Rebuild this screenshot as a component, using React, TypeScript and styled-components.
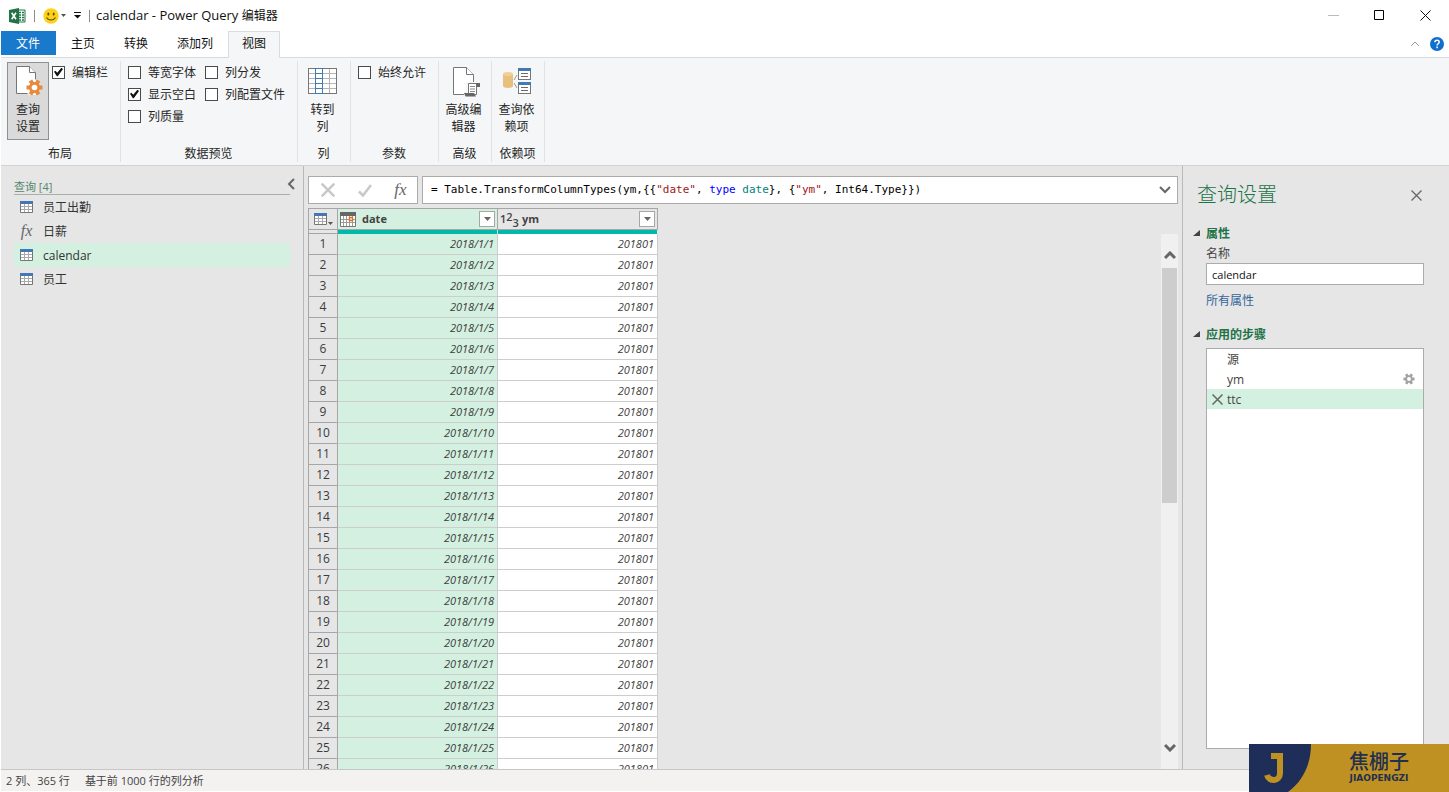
import React, { useState } from 'react';
import styled, { createGlobalStyle, css } from 'styled-components';

const sans = `"Open Sans", "Noto Sans CJK SC", sans-serif`;
const mono = `"DejaVu Sans Mono", "Noto Sans CJK SC", monospace`;

const GlobalStyle = createGlobalStyle`
  *, *::before, *::after { box-sizing: border-box; }
  body { margin: 0; background: #fff; font: 12px/17px ${sans}; color: #262626; }
  button, input { font: inherit; color: inherit; margin: 0; padding: 0; }
  button { background: none; border: 0; cursor: pointer; }
  svg { display: block; flex: none; }
  h1, h2, h3, p, ul, ol { margin: 0; padding: 0; font: inherit; list-style: none; }
`;

const Window = styled.div`
  position: relative;
  display: flex;
  flex-direction: column;
  height: 100vh;
  padding: 0 0 1px 1px;
  overflow: hidden;
`;

/* Title bar */
const TitleBar = styled.header`
  display: flex;
  align-items: center;
  height: 31px;
  padding: 0 18px 0 8px;
`;
const Divider = styled.span`
  width: 1px;
  height: 12px;
  background: #8a8a8a;
`;
const QuickAccess = styled.div`
  display: flex;
  align-items: center;
  gap: 8px;
  margin-right: 6px;
`;
const QuickButton = styled.button`
  display: flex;
  align-items: center;
  gap: 2px;
`;
const WindowTitle = styled.h1`
  flex: 1;
  font-size: 13px;
  color: #111;
  span { font-size: 12px; }
`;
const WindowButtons = styled.div`
  display: flex;
  gap: 35px;
`;
const IconButton = styled.button`
  display: grid;
  place-items: center;
`;

/* Ribbon tabs */
const TabBar = styled.nav`
  display: flex;
  align-items: flex-start;
  gap: 1px;
  height: 27px;
  padding-right: 5px;
  border-bottom: 1px solid #dadbdc;
`;
const Tab = styled.button<{ $kind?: 'file' | 'active' }>`
  height: 24px;
  padding: 0 14px;
  color: #111;
  ${(p) => p.$kind === 'file' && css`
    padding: 0 16px 0 15px;
    background: #1979ca;
    color: #fff;
  `}
  ${(p) => p.$kind === 'active' && css`
    height: 27px;
    padding: 0 13px 3px;
    border: 1px solid #dadbdc;
    border-bottom: 0;
    background: #f5f6f7;
  `}
`;
const TabTools = styled.div`
  display: flex;
  align-items: center;
  align-self: center;
  gap: 10px;
  margin-left: auto;
`;

/* Ribbon */
const Ribbon = styled.section`
  display: flex;
  height: 108px;
  padding: 3px 0;
  background: #f5f6f7;
  border-bottom: 1px solid #d2d2d2;
`;
const Group = styled.div<{ $width: number }>`
  display: flex;
  flex-direction: column;
  justify-content: space-between;
  width: ${(p) => p.$width}px;
  border-right: 1px solid #e1e2e3;
`;
const GroupBody = styled.div<{ $center?: boolean }>`
  display: flex;
  gap: 3px;
  padding: 0 7px;
  ${(p) => p.$center && css`justify-content: center; padding: 0 2px 0 0;`}
`;
const GroupLabel = styled.div`
  padding-right: 1px;
  text-align: center;
  line-height: 16px;
`;
const BigButton = styled.button<{ $pressed?: boolean }>`
  display: flex;
  flex-direction: column;
  align-items: center;
  gap: 3px;
  width: 42px;
  height: 78px;
  margin: 1px 0 0 -1px;
  padding: 3px 0 0;
  border: 1px solid transparent;
  white-space: pre-line;
  ${(p) => p.$pressed && css`
    background: #d9dad9;
    border-color: #919191;
  `}
`;
const CheckGrid = styled.div`
  display: grid;
  grid-auto-flow: column;
  grid-template-rows: repeat(3, 22px);
  column-gap: 9px;
`;
const CheckLabel = styled.label`
  display: flex;
  align-items: center;
  gap: 7px;
  white-space: nowrap;
`;
const CheckBox = styled.input`
  appearance: none;
  display: grid;
  place-items: center;
  width: 13px;
  height: 13px;
  border: 1px solid #4a4a4a;
  background: #fff;
  &:checked::after {
    content: '';
    width: 9px;
    height: 9px;
    background: #111;
    clip-path: polygon(0 48%, 16% 36%, 36% 58%, 82% 2%, 100% 16%, 42% 96%, 32% 96%);
  }
`;

/* Work area */
const Body = styled.main`
  display: flex;
  flex: 1;
  min-height: 0;
  background: #e6e6e6;
`;
const QueriesPane = styled.aside`
  width: 303px;
  flex: none;
  padding: 12px 13px 0;
  border-right: 1px solid #b9b9b9;
`;
const QueriesHead = styled.div`
  display: flex;
  align-items: flex-start;
  justify-content: space-between;
  height: 17px;
  border-bottom: 1px solid #a9aeab;
  color: #56876e;
  h2 { font-size: 11px; line-height: 18px; }
  button { margin-right: -5px; }
`;
const QueryItem = styled.button<{ $on?: boolean }>`
  display: flex;
  align-items: center;
  gap: 10px;
  width: 100%;
  height: 24px;
  padding-left: 6px;
  color: #333;
  background: ${(p) => (p.$on ? '#d3f0e0' : 'transparent')};
`;
const Centre = styled.section`
  display: flex;
  flex-direction: column;
  gap: 4px;
  flex: 1;
  min-width: 0;
  padding: 10px 4px 0;
`;
const FormulaRow = styled.div`
  display: flex;
  gap: 4px;
  height: 28px;
`;
const FormulaTools = styled.div`
  display: flex;
  align-items: center;
  justify-content: space-between;
  width: 110px;
  padding: 0 10px 0 12px;
  background: #fff;
  border: 1px solid #ababab;
`;
const FormulaBox = styled.div`
  display: flex;
  align-items: center;
  justify-content: space-between;
  flex: 1;
  padding: 0 6px 0 8px;
  background: #fff;
  border: 1px solid #ababab;
  font: 11px/16px ${mono};
  color: #000;
`;
const Code = styled.code<{ $c?: string }>`
  font-family: inherit;
  white-space: pre;
  color: ${(p) => p.$c ?? 'inherit'};
`;
const GridArea = styled.div`
  display: flex;
  justify-content: space-between;
  flex: 1;
  min-height: 0;
  overflow: hidden;
`;
const DataTable = styled.table`
  align-self: flex-start;
  width: 350px;
  table-layout: fixed;
  border-collapse: separate;
  border-spacing: 0;
  border-left: 1px solid #a6a6a6;
  font-size: 11px;
  line-height: 16px;
  color: #3b3b3b;
  th, td { padding: 0; }
`;
const ColumnHead = styled.th<{ $on?: boolean; $narrow?: boolean }>`
  width: ${(p) => (p.$narrow ? '29px' : 'auto')};
  height: 22px;
  border: 1px solid #a6a6a6;
  border-left: 0;
  text-align: left;
  background: ${(p) => (p.$on ? '#d3f0e0' : '#e6e6e6')};
`;
const HeadContent = styled.div`
  display: flex;
  align-items: center;
  justify-content: center;
  gap: 6px;
  padding: 0 2px;
  color: #444;
  span { flex: 1; }
`;
const FilterButton = styled.button`
  display: grid;
  place-items: center;
  width: 16px;
  height: 16px;
  background: #fff;
  border: 1px solid #a6a6a6;
`;
const QualityCell = styled.td<{ $bar?: boolean }>`
  height: 4px;
  border-right: 1px solid ${(p) => (p.$bar ? '#d8f2ee' : '#a6a6a6')};
  border-bottom: ${(p) => (p.$bar ? 0 : '1px solid #a6a6a6')};
  background: ${(p) => (p.$bar ? '#01b8aa' : '#e6e6e6')};
`;
const RowNumber = styled.th`
  height: 21px;
  border-right: 1px solid #a6a6a6;
  border-bottom: 1px solid #a6a6a6;
  font-size: 12px;
  font-weight: 400;
`;
const Cell = styled.td<{ $on?: boolean }>`
  height: 21px;
  border-right: 1px solid #cdcdcd;
  border-bottom: 1px solid #cdcdcd;
  background: ${(p) => (p.$on ? '#d3f0e0' : '#fff')};
  text-align: right;
  font-style: italic;
  && { padding-right: 3px; }
`;
const ScrollTrack = styled.div`
  display: flex;
  flex-direction: column;
  width: 17px;
  margin-top: 26px;
  background: #f0f0f0;
`;
const ScrollArrow = styled.button`
  display: grid;
  place-items: end center;
  height: 34px;
  padding-bottom: 8px;
`;
const ScrollThumb = styled.div`
  flex: 0 0 44%;
  margin: 0 1px;
  background: #cdcdcd;
`;
const ScrollEnd = styled(ScrollArrow)`
  margin-top: auto;
  padding-bottom: 17px;
`;

/* Query settings */
const SettingsPane = styled.aside`
  display: flex;
  flex-direction: column;
  flex: none;
  width: 267px;
  padding: 15px 25px 20px 10px;
  border-left: 1px solid #b9b9b9;
`;
const SettingsHead = styled.div`
  display: flex;
  align-items: center;
  justify-content: space-between;
  height: 28px;
  padding: 0 2px 0 4px;
  margin-bottom: 14px;
  color: #217346;
  h2 { font-size: 20px; line-height: 28px; font-weight: 300; }
`;
const SectionTitle = styled.h3`
  display: flex;
  align-items: center;
  gap: 6px;
  height: 20px;
  color: #217346;
  font-weight: 700;
`;
const Field = styled.div`
  display: flex;
  flex-direction: column;
  gap: 1px;
  padding: 2px 0 0 13px;
  margin-bottom: 15px;
  color: #444;
`;
const NameInput = styled.input`
  width: 100%;
  height: 22px;
  margin-bottom: 6px;
  padding: 0 5px;
  font-size: 11px;
  color: #111;
  background: #fff;
  border: 1px solid #ababab;
  border-radius: 0;
`;
const PropertiesLink = styled.a`
  color: #33669b;
  text-decoration: none;
`;
const StepList = styled.ol`
  flex: 1;
  margin: 4px 0 0 13px;
  background: #fff;
  border: 1px solid #ababab;
`;
const Step = styled.li<{ $on?: boolean }>`
  display: grid;
  grid-template-columns: 12px 1fr auto;
  align-items: center;
  gap: 4px;
  height: 20px;
  padding: 0 8px 0 4px;
  color: #444;
  background: ${(p) => (p.$on ? '#d3f0e0' : 'transparent')};
`;

const StatusBar = styled.footer`
  display: flex;
  align-items: center;
  gap: 15px;
  height: 22px;
  padding: 0 5px 1px;
  border-top: 1px solid #c6c6c6;
  background: #f3f2f1;
  font-size: 11px;
  color: #444;
`;

/* Author badge laid over the lower right corner */
const Badge = styled.div`
  position: absolute;
  right: 0;
  bottom: 0;
  display: flex;
  width: 200px;
  height: 48px;
  background: #bf9022;
  color: #22304f;
`;
const BadgeText = styled.div`
  display: flex;
  flex-direction: column;
  align-items: center;
  gap: 2px;
  padding: 7px 0 0 38px;
  strong { font: 500 20px/20px "Noto Sans CJK SC", sans-serif; }
  small { font: 700 9px/11px "DejaVu Sans", sans-serif; }
`;

const Excel = () => (
  <svg width="17" height="16" viewBox="0 0 17 16">
    <path d="M9 2h7v12H9z" fill="#fff" stroke="#217346" />
    <path d="M10 4.500h2M13 4.500h2M10 7h2M13 7h2M10 9.500h2M13 9.500h2M10 12h2M13 12h2" stroke="#217346" strokeWidth="1.300" />
    <path d="M0 2l10-2v16L0 14z" fill="#217346" />
    <path d="M2.700 4.800l4.300 6.400M7 4.800l-4.300 6.400" stroke="#fff" strokeWidth="1.600" />
  </svg>
);
const Smile = () => (
  <svg width="16" height="16" viewBox="0 0 16 16">
    <circle cx="8" cy="8" r="7.700" fill="#fcd116" />
    <ellipse cx="5.300" cy="6" rx="1" ry="1.500" fill="#5b4a12" />
    <ellipse cx="10.700" cy="6" rx="1" ry="1.500" fill="#5b4a12" />
    <path d="M3.500 9.500c2 3.300 7 3.300 9 0" fill="none" stroke="#5b4a12" strokeWidth="1.200" />
  </svg>
);
const Caret = () => (
  <svg width="5" height="3" viewBox="0 0 5 3"><path d="M0 0h5L2.500 3z" fill="#555" /></svg>
);
const FilterCaret = () => (
  <svg width="7" height="4" viewBox="0 0 7 4"><path d="M0 0h7L3.500 4z" fill="#666" /></svg>
);
const Customize = () => (
  <svg width="7" height="7" viewBox="0 0 7 7"><path d="M0 .5h7" stroke="#111" /><path d="M0 3h7L3.500 6.500z" fill="#111" /></svg>
);
const Cross = ({ size = 11, color = '#111', weight = 1 }: { size?: number; color?: string; weight?: number }) => (
  <svg width={size} height={size} viewBox="0 0 11 11"><path d="M.5.5l10 10M10.500.5l-10 10" stroke={color} strokeWidth={weight} /></svg>
);
const Chevron = ({ d, w, h, color = '#666', weight = 2 }: { d: string; w: number; h: number; color?: string; weight?: number }) => (
  <svg width={w} height={h} viewBox={`0 0 ${w} ${h}`}><path d={d} fill="none" stroke={color} strokeWidth={weight} /></svg>
);
const Help = () => (
  <svg width="14" height="14" viewBox="0 0 14 14">
    <circle cx="7" cy="7" r="7" fill="#0f6fce" />
    <path d="M4.900 5.300c0-2.700 4.300-2.700 4.300-.2 0 1.700-2.100 1.600-2.100 3.400M7.100 9.600v1.600" fill="none" stroke="#fff" strokeWidth="1.500" />
  </svg>
);
const Gear = ({ x, y, s, color, hole }: { x: number; y: number; s: number; color: string; hole: string }) => (
  <g transform={`translate(${x} ${y}) scale(${s})`}>
    {[0, 60, 120].map((a) => (
      <rect key={a} x="-2" y="-8" width="4" height="16" fill={color} transform={`rotate(${a + 30})`} />
    ))}
    <circle r="5.500" fill={color} />
    <circle r="2.800" fill={hole} />
  </g>
);
const SettingsIcon = () => (
  <svg width="32" height="32" viewBox="0 0 32 32">
    <path d="M4.500.5h13l6 6v21h-19z" fill="#fff" stroke="#767676" />
    <path d="M17.500.5v6h6" fill="#fff" stroke="#767676" />
    <path d="M14 22a8.500 8.500 0 0 1 10-8.500V29H17a8.500 8.500 0 0 1-3-7z" fill="#fff" />
    <Gear x={22.5} y={21.5} s={1} color="#e8893c" hole="#fff" />
  </svg>
);
const GoToColumn = () => (
  <svg width="30" height="32" viewBox="0 0 30 32">
    <rect x=".5" y="2.500" width="28" height="25" fill="#fff" stroke="#767676" />
    <path d="M1 7.500h27M1 12.500h27M1 17.500h27M1 22.500h27M21.500 3v24" stroke="#b5b5b5" />
    <path d="M7.500 2.500h7v25h-7zM8 7.500h6M8 12.500h6M8 17.500h6M8 22.500h6" fill="none" stroke="#3d7cb8" />
  </svg>
);
const AdvancedIcon = () => (
  <svg width="32" height="32" viewBox="0 0 32 32">
    <path d="M5.500 1.500h13l7 7v20h-20z" fill="#fff" stroke="#767676" />
    <path d="M18.500 1.500v7h7" fill="#fff" stroke="#767676" />
    <path d="M20 17.500h11v3h-2.500v10H17.500v-3h2z" fill="#fff" stroke="#f5f6f7" strokeWidth="3" />
    <path d="M20.500 17.500h8v11h-8z" fill="#fff" stroke="#767676" />
    <path d="M28 17h4v4h-4zM16 27h10l2 3.500h-10.500z" fill="#666" />
    <path d="M22 20.500h5M22 23h5M22 25.500h5" stroke="#8a8a8a" />
  </svg>
);
const Dependencies = () => (
  <svg width="30" height="32" viewBox="0 0 30 32">
    <path d="M1 8v12c0 2.600 10 2.600 10 0V8z" fill="#e8c07d" />
    <ellipse cx="6" cy="8" rx="5" ry="2" fill="#f1cf97" />
    <path d="M12 14l3-5M12 17l3 5" stroke="#9a9a9a" />
    {[2, 16].map((y) => (
      <g key={y}>
        <rect x="16.500" y={y + 0.5} width="12" height="11" fill="#fff" stroke="#767676" />
        <rect x="16" y={y} width="13" height="3" fill="#4478b5" />
        <path d={`M19 ${y + 5.5}h7M19 ${y + 8.5}h7`} stroke="#6a6a6a" />
      </g>
    ))}
  </svg>
);
const TableIcon = () => (
  <svg width="13" height="12" viewBox="0 0 13 12">
    <path d="M.5 2v9.500h12V2" fill="#fff" stroke="#767676" />
    <path d="M1 5.500h11M1 8.500h11M4.500 3v8M8.500 3v8" stroke="#a9a9a9" />
    <path d="M0 0h13v3H0z" fill="#4478b5" />
  </svg>
);
const BigTableIcon = () => (
  <svg width="19" height="13" viewBox="0 0 19 13">
    <path d="M.5 2v9.500h12V2" fill="#fff" stroke="#767676" />
    <path d="M1 5.500h11M1 8.500h11M4.500 3v8M8.500 3v8" stroke="#a9a9a9" />
    <path d="M0 0h13v3H0z" fill="#4478b5" />
    <path d="M14 9h5l-2.500 3z" fill="#555" />
  </svg>
);
const CalendarIcon = () => (
  <svg width="16" height="15" viewBox="0 0 16 15">
    <path d="M.5.5h15v14H.5z" fill="#fff" stroke="#767676" />
    <path d="M1 7.500h14M1 10.500h14M3.500 4v10M6.500 4v10M9.500 4v10M12.500 4v10" stroke="#9c9c9c" />
    <path d="M0 0h16v4H0z" fill="#666" />
    <path d="M9.500 5.500h3v3h-3z" fill="#fff" stroke="#e0701c" strokeWidth="1.400" />
  </svg>
);
const NumberType = styled.i`
  display: flex;
  width: 16px;
  font: 600 11px/16px ${sans};
  sup, sub { font-size: 11px; line-height: 11px; }
  sup { padding-bottom: 3px; }
  sub { padding-top: 6px; }
`;
const Fx = styled.i<{ $size: number }>`
  width: 13px;
  font: italic ${(p) => p.$size}px/20px "Liberation Serif", serif;
  color: #666;
`;
const Check = () => (
  <svg width="14" height="13" viewBox="0 0 14 13"><path d="M1 7.500l4 4L13 1" fill="none" stroke="#c9c9c9" strokeWidth="2.600" /></svg>
);
const Triangle = () => (
  <svg width="7" height="7" viewBox="0 0 7 7"><path d="M7 0v6H0z" fill="#444" /></svg>
);

const rows = Array.from({ length: 26 }, (_, i) => ({ date: `2018/1/${i + 1}`, ym: '201801' }));
const queries = ['员工出勤', '日薪', 'calendar', '员工'];

const Option = ({ label, on = false }: { label: string; on?: boolean }) => (
  <CheckLabel><CheckBox type="checkbox" defaultChecked={on} />{label}</CheckLabel>
);

export default function App() {
  const [selected, setSelected] = useState('calendar');
  return (
    <Window>
      <GlobalStyle />
      <TitleBar>
        <QuickAccess>
          <Excel />
          <Divider />
          <QuickButton aria-label="反馈"><Smile /><Caret /></QuickButton>
          <QuickButton aria-label="自定义快速访问工具栏"><Customize /></QuickButton>
          <Divider />
        </QuickAccess>
        <WindowTitle>calendar - Power Query <span>编辑器</span></WindowTitle>
        <WindowButtons>
          <IconButton aria-label="最小化"><Chevron d="M0 5.500h11" w={11} h={11} color="#bbb" weight={1} /></IconButton>
          <IconButton aria-label="最大化"><Chevron d="M.5.5h9v9H.5z" w={11} h={11} color="#000" weight={1} /></IconButton>
          <IconButton aria-label="关闭"><Cross /></IconButton>
        </WindowButtons>
      </TitleBar>

      <TabBar>
        <Tab $kind="file">文件</Tab>
        <Tab>主页</Tab>
        <Tab>转换</Tab>
        <Tab>添加列</Tab>
        <Tab $kind="active">视图</Tab>
        <TabTools>
          <IconButton aria-label="折叠功能区"><Chevron d="M1 5l4-4 4 4" w={10} h={6} color="#999" weight={1} /></IconButton>
          <IconButton aria-label="帮助"><Help /></IconButton>
        </TabTools>
      </TabBar>

      <Ribbon>
        <Group $width={120}>
          <GroupBody>
            <BigButton $pressed><SettingsIcon />{'查询\n设置'}</BigButton>
            <CheckGrid><Option label="编辑栏" on /></CheckGrid>
          </GroupBody>
          <GroupLabel>布局</GroupLabel>
        </Group>
        <Group $width={177}>
          <GroupBody>
            <CheckGrid>
              <Option label="等宽字体" />
              <Option label="显示空白" on />
              <Option label="列质量" />
              <Option label="列分发" />
              <Option label="列配置文件" />
            </CheckGrid>
          </GroupBody>
          <GroupLabel>数据预览</GroupLabel>
        </Group>
        <Group $width={53}>
          <GroupBody $center><BigButton><GoToColumn />{'转到\n列'}</BigButton></GroupBody>
          <GroupLabel>列</GroupLabel>
        </Group>
        <Group $width={88}>
          <GroupBody><CheckGrid><Option label="始终允许" /></CheckGrid></GroupBody>
          <GroupLabel>参数</GroupLabel>
        </Group>
        <Group $width={53}>
          <GroupBody $center><BigButton><AdvancedIcon />{'高级编\n辑器'}</BigButton></GroupBody>
          <GroupLabel>高级</GroupLabel>
        </Group>
        <Group $width={53}>
          <GroupBody $center><BigButton><Dependencies />{'查询依\n赖项'}</BigButton></GroupBody>
          <GroupLabel>依赖项</GroupLabel>
        </Group>
      </Ribbon>

      <Body>
        <QueriesPane>
          <QueriesHead>
            <h2>查询 [4]</h2>
            <IconButton aria-label="折叠"><Chevron d="M7 1L2 6l5 5" w={8} h={12} /></IconButton>
          </QueriesHead>
          {queries.map((name) => (
            <QueryItem key={name} $on={name === selected} onClick={() => setSelected(name)}>
              {name === '日薪' ? <Fx $size={16}>fx</Fx> : <TableIcon />}
              {name}
            </QueryItem>
          ))}
        </QueriesPane>

        <Centre>
          <FormulaRow>
            <FormulaTools>
              <IconButton aria-label="取消"><Cross size={14} color="#c9c9c9" weight={2} /></IconButton>
              <IconButton aria-label="确认"><Check /></IconButton>
              <IconButton aria-label="插入步骤"><Fx $size={17}>fx</Fx></IconButton>
            </FormulaTools>
            <FormulaBox>
              <Code>
                {'= Table.TransformColumnTypes(ym,{{'}<Code $c="#a31515">"date"</Code>{', '}
                <Code $c="#0000ff">type</Code> <Code $c="#008080">date</Code>{'}, {'}
                <Code $c="#a31515">"ym"</Code>{', Int64.Type}})'}
              </Code>
              <IconButton aria-label="展开编辑栏"><Chevron d="M1 1l5 5 5-5" w={12} h={8} /></IconButton>
            </FormulaBox>
          </FormulaRow>
          <GridArea>
            <DataTable>
              <thead>
                <tr>
                  <ColumnHead $narrow><HeadContent><IconButton aria-label="表菜单"><BigTableIcon /></IconButton></HeadContent></ColumnHead>
                  <ColumnHead $on>
                    <HeadContent><CalendarIcon /><span>date</span><FilterButton aria-label="筛选 date"><FilterCaret /></FilterButton></HeadContent>
                  </ColumnHead>
                  <ColumnHead>
                    <HeadContent>
                      <NumberType>1<sup>2</sup><sub>3</sub></NumberType>
                      <span>ym</span>
                      <FilterButton aria-label="筛选 ym"><FilterCaret /></FilterButton>
                    </HeadContent>
                  </ColumnHead>
                </tr>
                <tr><QualityCell /><QualityCell $bar /><QualityCell $bar /></tr>
              </thead>
              <tbody>
                {rows.map((r, i) => (
                  <tr key={r.date}>
                    <RowNumber scope="row">{i + 1}</RowNumber>
                    <Cell $on>{r.date}</Cell>
                    <Cell>{r.ym}</Cell>
                  </tr>
                ))}
              </tbody>
            </DataTable>
            <ScrollTrack>
              <ScrollArrow aria-label="向上滚动"><Chevron d="M1 7l5-5 5 5" w={12} h={9} weight={3} /></ScrollArrow>
              <ScrollThumb />
              <ScrollEnd aria-label="向下滚动"><Chevron d="M1 2l5 5 5-5" w={12} h={9} weight={3} /></ScrollEnd>
            </ScrollTrack>
          </GridArea>
        </Centre>

        <SettingsPane>
          <SettingsHead>
            <h2>查询设置</h2>
            <IconButton aria-label="关闭查询设置"><Cross color="#666" weight={1.3} /></IconButton>
          </SettingsHead>
          <SectionTitle><Triangle />属性</SectionTitle>
          <Field>
            <label htmlFor="query-name">名称</label>
            <NameInput id="query-name" defaultValue="calendar" />
            <PropertiesLink href="#properties">所有属性</PropertiesLink>
          </Field>
          <SectionTitle><Triangle />应用的步骤</SectionTitle>
          <StepList>
            <Step><i /><span>源</span></Step>
            <Step>
              <i /><span>ym</span>
              <IconButton aria-label="步骤设置">
                <svg width="12" height="12" viewBox="0 0 12 12"><Gear x={6} y={6} s={0.7} color="#a3a3a3" hole="#fff" /></svg>
              </IconButton>
            </Step>
            <Step $on>
              <IconButton aria-label="删除步骤"><Cross color="#666" weight={1.5} /></IconButton>
              <span>ttc</span>
            </Step>
          </StepList>
        </SettingsPane>
      </Body>

      <StatusBar><span>2 列、365 行</span><span>基于前 1000 行的列分析</span></StatusBar>

      <Badge>
        <svg width="62" height="48" viewBox="0 0 62 48">
          <path d="M0 0h62c0 20-8 37-23 48H0z" fill="#1f2e58" />
          <path d="M22 12h9v17c0 9-11 9-13 2" fill="none" stroke="#bf9022" strokeWidth="6" />
        </svg>
        <BadgeText><strong>焦棚子</strong><small>JIAOPENGZI</small></BadgeText>
      </Badge>
    </Window>
  );
}
